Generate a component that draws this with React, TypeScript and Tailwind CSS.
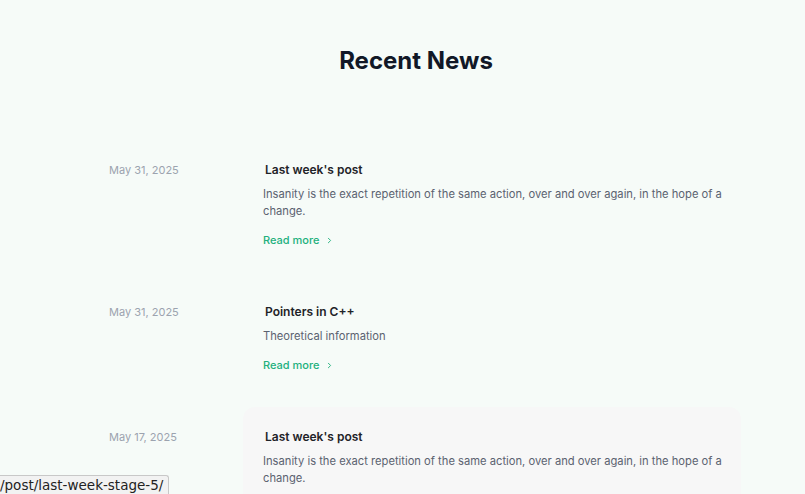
import { ChevronRight } from 'lucide-react';

const posts = [
  {
    date: 'May 31, 2025',
    title: "Last week's post",
    description: 'Insanity is the exact repetition of the same action, over and over again, in the hope of a change.',
  },
  {
    date: 'May 31, 2025',
    title: 'Pointers in C++',
    description: 'Theoretical information',
  },
  {
    date: 'May 17, 2025',
    title: "Last week's post",
    description: 'Insanity is the exact repetition of the same action, over and over again, in the hope of a change.',
    hovered: true,
  },
];

export default function App() {
  return (
    <main className="min-h-screen bg-[#f6fbf8] font-['Inter',sans-serif] overflow-hidden">
      <div className="flex justify-center pt-[45px] pl-[27px]">
        <h1 className="text-2xl leading-8 font-bold text-[#111827]">Recent News</h1>
      </div>

      <div className="mt-[63px] ml-[109px] w-[632px] flex flex-col gap-[14px]">
        {posts.map((post, i) => (
          <article key={i} className="flex">
            <div className="w-[134px] shrink-0 pt-[21px] text-[11px] leading-[18px] text-[#9ca3af]">
              {post.date}
            </div>
            <div
              className={`flex-1 rounded-xl py-5 pl-5 pr-3 ${post.hovered ? 'bg-[#f7f7f7]' : ''}`}
            >
              <h2 className="ml-[2px] text-[12px] leading-5 font-semibold text-[#1f2328]">{post.title}</h2>
              <p className="mt-[6px] text-[11.2px] leading-[17px] text-[#5b6270]">{post.description}</p>
              <a href="#" className="mt-[12px] flex items-center gap-1 text-[11px] leading-4 font-medium text-[#22b07d]">
                Read more
                <ChevronRight size={9} strokeWidth={2.5} className="ml-[2px]" />
              </a>
            </div>
          </article>
        ))}
      </div>

      <div className="fixed bottom-0 left-0 h-[19px] w-[169px] overflow-hidden rounded-tr-[3px] border border-l-0 border-b-0 border-[#c8c8c8] bg-[#f2f2f2] font-['DejaVu_Sans',sans-serif] text-[13.5px] leading-[18px] text-[#222]">
        /post/last-week-stage-5/
      </div>
    </main>
  );
}
